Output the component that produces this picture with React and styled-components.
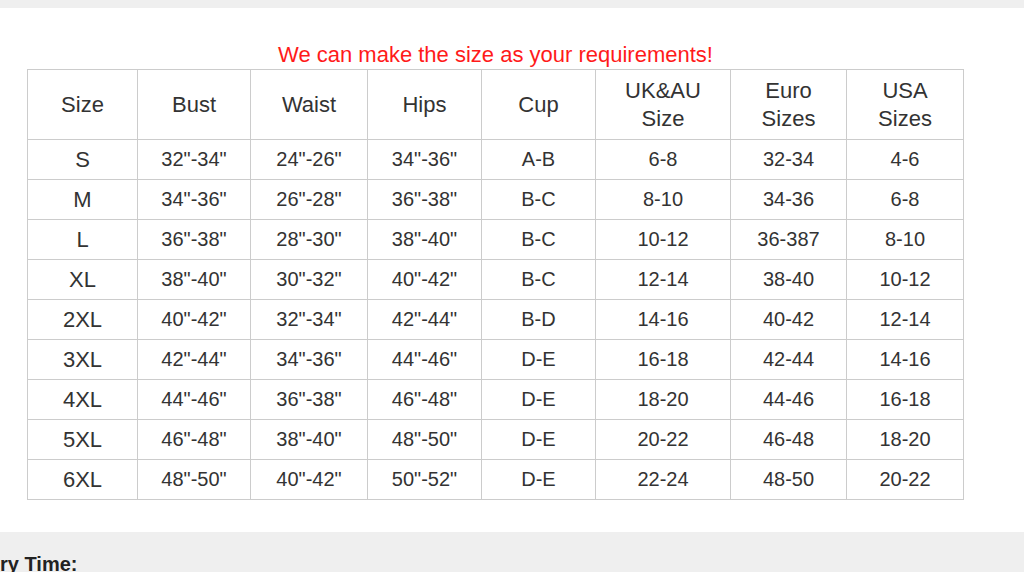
import React from "react";
import styled, { createGlobalStyle } from "styled-components";

const GlobalStyle = createGlobalStyle`
  body {
    margin: 0;
    background: #ffffff;
    font-family: Arial, "Liberation Sans", sans-serif;
  }
`;

const TopStrip = styled.div`
  height: 8px;
  background: #efefef;
`;

const Section = styled.section`
  padding: 32px 0 0 27px;
  height: 524px;
  box-sizing: border-box;
`;

const Block = styled.div`
  width: 937px;
`;

const Caption = styled.div`
  color: #ff1a1a;
  font-size: 22px;
  line-height: 29px;
  text-align: center;
`;

const Table = styled.table`
  border-collapse: collapse;
  table-layout: fixed;
  width: 937px;
  color: #333;
`;

const HeadCell = styled.th`
  border: 1px solid #cccccc;
  height: 69px;
  padding: 0;
  font-weight: normal;
  font-size: 22px;
  line-height: 28px;
  text-align: center;
  vertical-align: middle;
`;

const Cell = styled.td`
  border: 1px solid #cccccc;
  height: 39px;
  padding: 0;
  font-size: ${(p) => (p.$big ? "22px" : "20px")};
  text-align: center;
  vertical-align: middle;
`;

const Footer = styled.div`
  height: 40px;
  background: #efefef;
  padding: 20px 0 0 0;
  box-sizing: border-box;
  overflow: hidden;
`;

const FooterTitle = styled.div`
  font-weight: bold;
  font-size: 20px;
  color: #222;
  line-height: 24px;
`;

const widths = [110, 113, 117, 114, 114, 135, 116, 117];

const headers = [
  ["Size"],
  ["Bust"],
  ["Waist"],
  ["Hips"],
  ["Cup"],
  ["UK&AU", "Size"],
  ["Euro", "Sizes"],
  ["USA", "Sizes"],
];

const rows = [
  ["S", '32"-34"', '24"-26"', '34"-36"', "A-B", "6-8", "32-34", "4-6"],
  ["M", '34"-36"', '26"-28"', '36"-38"', "B-C", "8-10", "34-36", "6-8"],
  ["L", '36"-38"', '28"-30"', '38"-40"', "B-C", "10-12", "36-387", "8-10"],
  ["XL", '38"-40"', '30"-32"', '40"-42"', "B-C", "12-14", "38-40", "10-12"],
  ["2XL", '40"-42"', '32"-34"', '42"-44"', "B-D", "14-16", "40-42", "12-14"],
  ["3XL", '42"-44"', '34"-36"', '44"-46"', "D-E", "16-18", "42-44", "14-16"],
  ["4XL", '44"-46"', '36"-38"', '46"-48"', "D-E", "18-20", "44-46", "16-18"],
  ["5XL", '46"-48"', '38"-40"', '48"-50"', "D-E", "20-22", "46-48", "18-20"],
  ["6XL", '48"-50"', '40"-42"', '50"-52"', "D-E", "22-24", "48-50", "20-22"],
];

function App() {
  return (
    <>
      <GlobalStyle />
      <TopStrip />
      <Section>
        <Block>
          <Caption>We can make the size as your requirements!</Caption>
          <Table>
            <colgroup>
              {widths.map((w, i) => (
                <col key={i} style={{ width: w }} />
              ))}
            </colgroup>
            <thead>
              <tr>
                {headers.map((lines, i) => (
                  <HeadCell key={i}>
                    {lines.map((l, j) => (
                      <div key={j}>{l}</div>
                    ))}
                  </HeadCell>
                ))}
              </tr>
            </thead>
            <tbody>
              {rows.map((row, i) => (
                <tr key={i}>
                  {row.map((v, j) => (
                    <Cell key={j} $big={j === 0}>
                      {v}
                    </Cell>
                  ))}
                </tr>
              ))}
            </tbody>
          </Table>
        </Block>
      </Section>
      <Footer>
        <FooterTitle>ry Time:</FooterTitle>
      </Footer>
    </>
  );
}

export default App;
